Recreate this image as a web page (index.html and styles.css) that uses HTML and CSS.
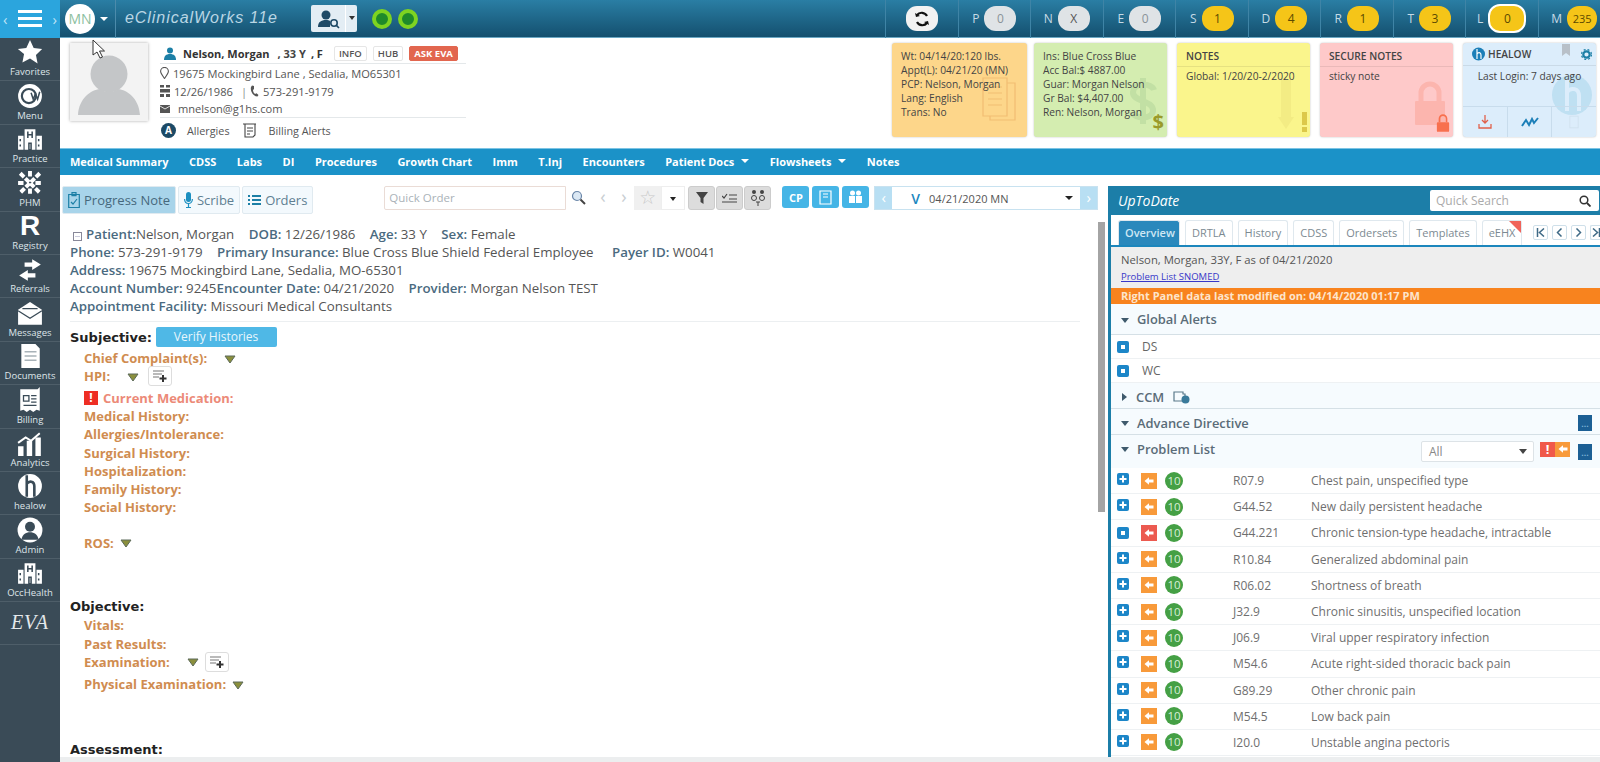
FILE: index.html
```html
<!DOCTYPE html>
<html lang="en">
<head>
    <meta charset="UTF-8">
    <title>eClinicalWorks 11e</title>
    <link rel="stylesheet" href="styles.css">
</head>
<body>
    <svg class="defs" width="0" height="0">
        <symbol id="i-arrow" viewBox="0 0 16 16"><path d="M2 8l6-5v3h6v4H8v3z" fill="#fff"/></symbol>
        <symbol id="i-plus" viewBox="0 0 12 12"><rect width="12" height="12" rx="2" fill="#1c86c8"/><path d="M6 2.5v7M2.5 6h7" stroke="#fff" stroke-width="2"/></symbol>
        <symbol id="i-dot" viewBox="0 0 12 12"><rect width="12" height="12" rx="2" fill="#1c86c8"/><rect x="4" y="4" width="4" height="4" fill="#fff"/></symbol>
        <symbol id="i-hosp" viewBox="0 0 24 24"><path d="M7 3h10v19H7zM1 9h5v13H1zM18 9h5v13h-5z" fill="#fff"/><path d="M10 5v6M14 5v6M10 8h4M11 16h2v6h-2zM3 12v2M3 17v2M20 12v2M20 17v2" stroke="#3a4b57" stroke-width="1.4" fill="none"/></symbol>
        <symbol id="i-tri" viewBox="0 0 12 9"><path d="M1 1h10L6 8z" fill="#8a8f3c" stroke="#5c6a5a"/></symbol>
        <symbol id="i-addnote" viewBox="0 0 16 14"><path d="M1 2h11M1 5h9M1 8h6" stroke="#777" stroke-width="1.2"/><path d="M11 6v7M7.5 9.5h7" stroke="#333" stroke-width="2"/></symbol>
    </svg>

    <!-- Top bar -->
    <header class="topbar">
        <div class="menu-box">
            <span class="chev">&#8249;</span>
            <span class="burger"><i></i><i></i><i></i></span>
            <span class="chev">&#8250;</span>
        </div>
        <div class="avatar">MN</div>
        <span class="caret-white"></span>
        <div class="brand">eClinicalWorks 11e</div>
        <div class="find-btn">
            <svg width="24" height="20" viewBox="0 0 24 20"><circle cx="9" cy="6" r="4.5" fill="#1f4a66"/><path d="M1 18c0-5 3-7 8-7 2 0 3 .4 4 1v6z" fill="#1f4a66"/><circle cx="17" cy="14" r="3.2" fill="none" stroke="#1f4a66" stroke-width="1.6"/><path d="M19.4 16.4l2.6 2.6" stroke="#1f4a66" stroke-width="1.6"/></svg>
            <span class="find-caret"></span>
        </div>
        <div class="lights"><span class="light"></span><span class="light"></span></div>
        <div class="counters">
            <div class="counter">
                <span class="refresh">
                    <svg width="18" height="18" viewBox="0 0 18 18"><path d="M14 6a6 6 0 0 0-10-1M4 12a6 6 0 0 0 10 1" fill="none" stroke="#111" stroke-width="2.2"/><path d="M2 3l1 4 4-1zM16 15l-1-4-4 1z" fill="#111"/></svg>
                </span>
            </div>
            <div class="counter"><b>P</b><span class="pill grey">0</span></div>
            <div class="counter"><b>N</b><span class="pill grey dark">X</span></div>
            <div class="counter"><b>E</b><span class="pill grey">0</span></div>
            <div class="counter"><b>S</b><span class="pill">1</span></div>
            <div class="counter"><b>D</b><span class="pill">4</span></div>
            <div class="counter"><b>R</b><span class="pill">1</span></div>
            <div class="counter"><b>T</b><span class="pill">3</span></div>
            <div class="counter"><b>L</b><span class="pill ring">0</span></div>
            <div class="counter"><b>M</b><span class="pill small">235</span></div>
        </div>
    </header>

    <div class="main">
        <!-- Left Sidebar -->
        <nav class="sidebar">
            <a class="side-item"><svg width="26" height="26" viewBox="0 0 24 24"><path d="M12 1l3.4 7.3 7.8 1-5.7 5.5 1.5 7.9L12 18l-7 3.7 1.5-7.9L.8 9.3l7.8-1z" fill="#fff"/></svg><span>Favorites</span></a>
            <a class="side-item"><svg width="26" height="26" viewBox="0 0 24 24"><circle cx="12" cy="12" r="11" fill="#fff"/><circle cx="11" cy="12" r="6.5" fill="none" stroke="#3a4b57" stroke-width="2"/><path d="M13 9l2 6 2-5 2 5 2-7" fill="none" stroke="#3a4b57" stroke-width="1.4"/></svg><span>Menu</span></a>
            <a class="side-item"><svg width="26" height="26"><use href="#i-hosp"/></svg><span>Practice</span></a>
            <a class="side-item"><svg width="26" height="26" viewBox="0 0 24 24"><path d="M3 3l18 18M21 3L3 21M12 1v6M12 17v6M1 12h6M17 12h6" stroke="#fff" stroke-width="3.6" stroke-dasharray="5 1.6" fill="none"/></svg><span>PHM</span></a>
            <a class="side-item"><strong class="big-r">R</strong><span>Registry</span></a>
            <a class="side-item"><svg width="26" height="24" viewBox="0 0 24 22"><path d="M14 1l8 5-8 5V8H7V4h7zM10 11l-8 5 8 5v-3h7v-4h-7z" fill="#fff"/></svg><span>Referrals</span></a>
            <a class="side-item"><svg width="26" height="24" viewBox="0 0 24 22"><path d="M12 0l11 7v14H1V7z" fill="#fff"/><path d="M1 8l11 7 11-7M5 6h14" stroke="#3a4b57" stroke-width="1.2" fill="none"/></svg><span>Messages</span></a>
            <a class="side-item"><svg width="24" height="26" viewBox="0 0 22 24"><path d="M3 1h13l4 4v18H3z" fill="#fff"/><path d="M6 8h11M6 12h11M6 16h11" stroke="#a8b2b8" stroke-width="1.4"/></svg><span>Documents</span></a>
            <a class="side-item"><svg width="24" height="26" viewBox="0 0 22 24"><path d="M2 2h16l2-2v22l-3-1-3 2-3-2-3 2-3-2-3 1z" fill="#fff"/><path d="M5 8h5v5H5zM12 8h5M12 11h5M12 14h5M5 17h12" stroke="#3a4b57" stroke-width="1.2" fill="none"/></svg><span>Billing</span></a>
            <a class="side-item"><svg width="26" height="24" viewBox="0 0 24 22"><path d="M1 13h5v9H1zM9 8h5v14H9zM17 5h5v17h-5z" fill="#fff"/><path d="M1 10l7-5 5 3 8-7" stroke="#fff" stroke-width="1.8" fill="none"/></svg><span>Analytics</span></a>
            <a class="side-item"><svg width="26" height="26" viewBox="0 0 24 24"><circle cx="12" cy="12" r="11" fill="#fff"/><path d="M9 2v20M9 10c2-3 7-3 7 2v10" stroke="#3a4b57" stroke-width="2.4" fill="none"/></svg><span>healow</span></a>
            <a class="side-item"><svg width="26" height="26" viewBox="0 0 24 24"><circle cx="12" cy="12" r="11.5" fill="#fff"/><circle cx="12" cy="9" r="4.6" fill="#3a4b57"/><path d="M4 21c1-5 4-7 8-7s7 2 8 7" fill="#3a4b57"/></svg><span>Admin</span></a>
            <a class="side-item"><svg width="26" height="26"><use href="#i-hosp"/></svg><span>OccHealth</span></a>
            <a class="side-item eva">EVA</a>
        </nav>

        <div class="content">
            <!-- Patient header -->
            <section class="patient">
                <div class="photo">
                    <svg width="78" height="78" viewBox="0 0 78 78"><circle cx="39" cy="31" r="18.5" fill="#c4c6c8"/><path d="M8 72c1-17 13-25 22-26 5 4 13 4 18 0 9 1 21 9 22 26z" fill="#c4c6c8"/></svg>
                </div>
                <div class="pt-info">
                    <div class="pt-name">
                        <svg width="12" height="13" viewBox="0 0 12 13"><circle cx="6" cy="3.5" r="3" fill="#1c7fa6"/><path d="M0 13c0-4 2-6 6-6s6 2 6 6z" fill="#1c7fa6"/></svg>
                        <strong>Nelson, Morgan</strong><strong class="pt-age">, 33 Y</strong><strong>, F</strong>
                        <span class="tag">INFO</span><span class="tag">HUB</span><span class="tag tag-red">ASK EVA</span>
                    </div>
                    <div class="pt-line">
                        <svg width="9" height="12" viewBox="0 0 9 12"><path d="M4.5 11.5C2 8 .6 6.2.6 4.3a3.9 3.9 0 0 1 7.8 0c0 1.900-1.400 3.700-3.900 7.200z" fill="none" stroke="#555" stroke-width="1.100"/></svg>
                        <span>19675 Mockingbird Lane , Sedalia, MO65301</span>
                    </div>
                    <div class="pt-line">
                        <svg width="10" height="12" viewBox="0 0 10 12"><path d="M0 0h4v2.500H0zM6 0h4v2.500H6zM0 4h10v3.500H0zM0 9h4v3H0zM6 9h4v3H6z" fill="#555"/></svg>
                        <span>12/26/1986</span><span class="bar">|</span>
                        <svg class="phone" width="9" height="12" viewBox="0 0 9 12"><path d="M2 .5l2 .5v3L3 5c0 2 1 3 2 4l1.500-.7L8.500 10l-1 1.500C3 11.500 0 6 1 2z" fill="#555"/></svg>
                        <span>573-291-9179</span>
                    </div>
                    <div class="pt-line pt-email">
                        <svg width="10" height="8" viewBox="0 0 10 8"><path d="M0 0h10v8H0z" fill="#555"/><path d="M0 1l5 3 5-3" stroke="#fff" stroke-width=".8" fill="none"/></svg>
                        <span>mnelson@g1hs.com</span>
                    </div>
                    <div class="pt-alerts">
                        <span class="alert-a">A</span><span class="alert-label">Allergies</span>
                        <svg width="16" height="15" viewBox="0 0 16 15"><path d="M1 1h13M3 1v13h8l2-2V1M5 5h6M5 8h6M5 11h3" stroke="#444" stroke-width="1.100" fill="none"/></svg>
                        <span class="alert-label">Billing Alerts</span>
                    </div>
                </div>
                <div class="cards">
                    <div class="card orange">
                        <svg class="watermark" width="34" height="44" viewBox="0 0 34 44"><path d="M1 1h24v38H1zM8 39v4h25V6h-8M6 10h14M6 16h14M6 22h14M6 28h14" fill="none" stroke="#f2bd72" stroke-width="1.200"/></svg>
                        <div>Wt: 04/14/20:120 lbs.</div>
                        <div>Appt(L): 04/21/20 (MN)</div>
                        <div>PCP: Nelson, Morgan</div>
                        <div>Lang: English</div>
                        <div>Trans: No</div>
                    </div>
                    <div class="card green">
                        <svg class="watermark wm-dollar" width="28" height="48" viewBox="0 0 28 48"><path d="M14 1v46M25 13c-2-7-20-8-21 2-1 10 21 8 20 19-1 9-19 8-21 1" fill="none" stroke="#c2e0a4" stroke-width="6"/></svg>
                        <div>Ins: Blue Cross Blue</div>
                        <div>Acc Bal:$ 4887.00</div>
                        <div>Guar: Morgan Nelson</div>
                        <div>Gr Bal: $4,407.00</div>
                        <div>Ren: Nelson, Morgan</div>
                        <span class="card-mark dollar">$</span>
                    </div>
                    <div class="card yellow">
                        <svg class="watermark wm-arrow" width="16" height="50" viewBox="0 0 16 50"><path d="M3 0h10v38h3l-8 12-8-12h3z" fill="#f3ec84"/></svg>
                        <div class="card-title">NOTES</div>
                        <div>Global: 1/20/20-2/2020</div>
                        <svg class="card-mark" width="5" height="20" viewBox="0 0 5 20"><path d="M0 0h5v13H0zM0 15h5v5H0z" fill="#dcc84a"/></svg>
                    </div>
                    <div class="card pink">
                        <svg class="watermark wm-lock" width="30" height="44" viewBox="0 0 30 44"><path d="M6 20V12a9 9 0 0 1 18 0v8" fill="none" stroke="#fcb5ae" stroke-width="5"/><rect y="20" width="30" height="24" rx="1" fill="#fcb5ae"/></svg>
                        <div class="card-title">SECURE NOTES</div>
                        <div>sticky note</div>
                        <svg class="card-mark" width="14" height="18" viewBox="0 0 16 20"><path d="M4 9V5a4 4 0 0 1 8 0v4" fill="none" stroke="#f8704e" stroke-width="2"/><rect x="1" y="9" width="14" height="11" rx="1" fill="#f8704e"/></svg>
                    </div>
                    <div class="card blue">
                        <svg class="watermark wm-healow" width="40" height="40" viewBox="0 0 40 40"><circle cx="20" cy="20" r="20" fill="#bfe0f2"/><path d="M15 4v32M15 17c4-5 12-4 12 4v15" stroke="#dcedfb" stroke-width="4" fill="none"/></svg>
                        <div class="card-title healow-title">
                            <svg width="13" height="14" viewBox="0 0 13 14"><circle cx="6.500" cy="7" r="6.500" fill="#1c7fb8"/><path d="M5 2v10M5 7c1-2 4-2 4 1v4" stroke="#fff" stroke-width="1.200" fill="none"/></svg>
                            <span>HEALOW</span>
                            <svg class="bookmark" width="8" height="12" viewBox="0 0 8 12"><path d="M0 0h8v12L4 9l-4 3z" fill="#b8c0c8"/></svg>
                            <svg width="11" height="11" viewBox="0 0 11 11"><circle cx="5.500" cy="5.500" r="3.200" fill="none" stroke="#1c7fa6" stroke-width="2.200"/><circle cx="5.500" cy="5.500" r="5" fill="none" stroke="#1c7fa6" stroke-width="1.200" stroke-dasharray="2 2"/></svg>
                        </div>
                        <div class="healow-login">Last Login: 7 days ago</div>
                        <div class="healow-foot">
                            <span><svg width="16" height="16" viewBox="0 0 16 16"><path d="M8 1v8M5 6l3 3 3-3M2 10v4h12v-4" fill="none" stroke="#e0604a" stroke-width="1.300"/></svg></span>
                            <span><svg width="18" height="12" viewBox="0 0 18 12"><path d="M1 10l4-6 3 5 3-6 2 4 4-5" fill="none" stroke="#1c7fb8" stroke-width="2"/></svg></span>
                            <span><svg width="10" height="14" viewBox="0 0 12 16"><rect x="1" y="1" width="10" height="14" fill="none" stroke="#cfe0ee"/></svg></span>
                        </div>
                    </div>
                </div>
            </section>

            <!-- Chart nav -->
            <div class="chart-nav">
                <a>Medical Summary</a>
                <a>CDSS</a>
                <a>Labs</a>
                <a>DI</a>
                <a>Procedures</a>
                <a>Growth Chart</a>
                <a>Imm</a>
                <a>T.Inj</a>
                <a>Encounters</a>
                <a class="has-caret">Patient Docs</a>
                <a class="has-caret">Flowsheets</a>
                <a>Notes</a>
            </div>

            <div class="work">
                <!-- Progress note -->
                <div class="note-pane">
                    <div class="toolbar">
                        <div class="note-tabs">
                            <span class="note-tab active">
                                <svg width="12" height="16" viewBox="0 0 12 16"><path d="M.7 2.500h10.600v13H.7z" fill="none" stroke="#1c7fa6" stroke-width="1.200"/><path d="M4 .7h4v3H4zM3 10l2 2 4-5" fill="none" stroke="#1c7fa6" stroke-width="1.200"/></svg>
                                Progress Note
                            </span>
                            <span class="note-tab">
                                <svg width="9" height="16" viewBox="0 0 9 16"><rect x="2" y="0" width="5" height="10" rx="2.500" fill="#1c8fc0"/><path d="M.6 7c0 6 7.800 6 7.800 0M4.500 12v3M2 15.500h5" fill="none" stroke="#1c8fc0" stroke-width="1.200"/></svg>
                                Scribe
                            </span>
                            <span class="note-tab">
                                <svg width="13" height="10" viewBox="0 0 13 10"><path d="M0 1h2M4 1h9M0 5h2M4 5h9M0 9h2M4 9h9" stroke="#1c7fa6" stroke-width="1.800"/></svg>
                                Orders
                            </span>
                        </div>
                        <div class="quick-order">
                            <span class="quick-input">Quick Order</span>
                            <span class="quick-btn">
                                <svg width="16" height="16" viewBox="0 0 16 16"><circle cx="6" cy="6" r="4.500" fill="#dbe8f4" stroke="#6a86a8" stroke-width="1.200"/><path d="M9.500 9.500l4.500 4.500" stroke="#444" stroke-width="2"/></svg>
                            </span>
                            <span class="quick-arrow">&#8249;</span>
                            <span class="quick-arrow">&#8250;</span>
                            <span class="quick-star">&#9734;</span>
                            <span class="quick-caret"></span>
                        </div>
                        <div class="tool-group">
                            <span class="tool-btn"><svg width="12" height="12" viewBox="0 0 12 12"><path d="M0 0h12L7.500 6v6l-3-2V6z" fill="#444"/></svg></span>
                            <span class="tool-btn"><svg width="16" height="12" viewBox="0 0 16 12"><path d="M0 4l2 2 3-4M7 3h8M7 7h8M0 10h15" fill="none" stroke="#444" stroke-width="1.200"/></svg></span>
                            <span class="tool-btn"><svg width="18" height="18" viewBox="0 0 18 18"><circle cx="5" cy="3" r="2" fill="#444"/><circle cx="13" cy="3" r="2" fill="#444"/><circle cx="5" cy="9" r="2.500" fill="none" stroke="#444"/><circle cx="13" cy="9" r="2.500" fill="none" stroke="#444"/><path d="M7 13h4M9 13v4" stroke="#444"/></svg></span>
                        </div>
                        <div class="blue-group">
                            <span class="blue-btn">CP</span>
                            <span class="blue-btn"><svg width="13" height="15" viewBox="0 0 13 15"><path d="M1 1h11v13H1zM4 4h5M4 7h5" fill="none" stroke="#fff" stroke-width="1.200"/></svg></span>
                            <span class="blue-btn"><svg width="15" height="14" viewBox="0 0 15 14"><circle cx="4.500" cy="3" r="2.500" fill="#fff"/><circle cx="10.500" cy="3" r="2.500" fill="#fff"/><path d="M1 6h6v7H1zM8 6h6v7H8z" fill="#fff"/></svg></span>
                        </div>
                        <div class="visit-select">
                            <span class="visit-nav">&#8249;</span>
                            <span class="visit-v">V</span>
                            <span class="visit-date">04/21/2020 MN</span>
                            <span class="visit-caret"></span>
                            <span class="visit-nav">&#8250;</span>
                        </div>
                    </div>

                    <div class="note-body">
                        <div class="demo">
                            <div><span class="collapse"></span><b>Patient:</b>Nelson, Morgan <b class="gap">DOB:</b> 12/26/1986 <b class="gap">Age:</b> 33 Y <b class="gap">Sex:</b> Female</div>
                            <div><b>Phone:</b> 573-291-9179 <b class="gap">Primary Insurance:</b> Blue Cross Blue Shield Federal Employee <b class="gap-lg">Payer ID:</b> W0041</div>
                            <div><b>Address:</b> 19675 Mockingbird Lane, Sedalia, MO-65301</div>
                            <div><b>Account Number:</b> 9245<b>Encounter Date:</b> 04/21/2020 <b class="gap">Provider:</b> Morgan Nelson TEST</div>
                            <div><b>Appointment Facility:</b> Missouri Medical Consultants</div>
                        </div>

                        <div class="section-head">Subjective: <span class="verify">Verify Histories</span></div>
                        <div class="item">Chief Complaint(s): <svg class="tri tri-wide" width="12" height="9"><use href="#i-tri"/></svg></div>
                        <div class="item">HPI: <svg class="tri tri-wide" width="12" height="9"><use href="#i-tri"/></svg><span class="add-note"><svg width="16" height="14"><use href="#i-addnote"/></svg></span></div>
                        <div class="item item-alert"><span class="bang">!</span>Current Medication:</div>
                        <div class="item">Medical History:</div>
                        <div class="item">Allergies/Intolerance:</div>
                        <div class="item">Surgical History:</div>
                        <div class="item">Hospitalization:</div>
                        <div class="item">Family History:</div>
                        <div class="item">Social History:</div>
                        <div class="item item-ros">ROS: <svg class="tri" width="12" height="9"><use href="#i-tri"/></svg></div>

                        <div class="section-head section-objective">Objective:</div>
                        <div class="item">Vitals:</div>
                        <div class="item">Past Results:</div>
                        <div class="item">Examination: <svg class="tri tri-wide" width="12" height="9"><use href="#i-tri"/></svg><span class="add-note add-note-tight"><svg width="16" height="14"><use href="#i-addnote"/></svg></span></div>
                        <div class="item item-physical">Physical Examination: <svg class="tri" width="12" height="9"><use href="#i-tri"/></svg></div>

                        <div class="section-head section-assessment">Assessment:</div>
                    </div>
                    <span class="note-scroll"></span>
                </div>

                <!-- Right panel -->
                <aside class="right-panel">
                    <div class="rp-head">
                        <span class="rp-title">UpToDate</span>
                        <span class="rp-search">Quick Search
                            <svg width="12" height="12" viewBox="0 0 12 12"><circle cx="5" cy="5" r="3.800" fill="none" stroke="#333" stroke-width="1.500"/><path d="M8 8l3.500 3.500" stroke="#333" stroke-width="1.800"/></svg>
                        </span>
                    </div>
                    <div class="rp-tabs">
                        <span class="rp-tab active">Overview</span>
                        <span class="rp-tab">DRTLA</span>
                        <span class="rp-tab">History</span>
                        <span class="rp-tab">CDSS</span>
                        <span class="rp-tab">Ordersets</span>
                        <span class="rp-tab">Templates</span>
                        <span class="rp-tab rp-flag">eEHX</span>
                        <span class="rp-pager">
                            <i><svg width="9" height="9" viewBox="0 0 9 9"><path d="M1.500 0v9M8 .5L3.500 4.500 8 8.500" fill="none" stroke="#3f6a86" stroke-width="1.500"/></svg></i>
                            <i><svg width="9" height="9" viewBox="0 0 9 9"><path d="M6.500 .5L2.500 4.500l4 4" fill="none" stroke="#3f6a86" stroke-width="1.500"/></svg></i>
                            <i><svg width="9" height="9" viewBox="0 0 9 9"><path d="M2.500 .5l4 4-4 4" fill="none" stroke="#3f6a86" stroke-width="1.500"/></svg></i>
                            <i class="pager-last"><svg width="9" height="9" viewBox="0 0 9 9"><path d="M7.500 0v9M1 .5l4.500 4L1 8.500" fill="none" stroke="#3f6a86" stroke-width="1.500"/></svg></i>
                        </span>
                    </div>
                    <div class="rp-summary">
                        <div>Nelson, Morgan, 33Y, F as of 04/21/2020</div>
                        <a>Problem List SNOMED</a>
                    </div>
                    <div class="rp-modified">Right Panel data last modified on: 04/14/2020 01:17 PM</div>

                    <div class="rp-section"><span class="down"></span>Global Alerts</div>
                    <div class="rp-alert"><svg width="12" height="12"><use href="#i-dot"/></svg><span>DS</span></div>
                    <div class="rp-alert"><svg width="12" height="12"><use href="#i-dot"/></svg><span>WC</span></div>
                    <div class="rp-section rp-short"><span class="right"></span>CCM
                        <svg class="ccm" width="18" height="15" viewBox="0 0 18 15"><path d="M2 3h9v2h2v7H2z" fill="none" stroke="#5a7a8a" stroke-width="1.200"/><circle cx="13.500" cy="10.500" r="4" fill="#3a7a9a"/></svg>
                    </div>
                    <div class="rp-section rp-short"><span class="down"></span>Advance Directive<span class="more">...</span></div>
                    <div class="rp-section rp-problem">
                        <span class="down"></span><span class="rp-problem-name">Problem List</span>
                        <span class="rp-filter">All<span class="filter-caret"></span></span>
                        <span class="flag-pair"><span class="flag-red">!</span><span class="flag-orange"><svg width="12" height="12"><use href="#i-arrow"/></svg></span></span>
                        <span class="more">...</span>
                    </div>

                    <div class="problem"><svg class="pm" width="12" height="12"><use href="#i-plus"/></svg><span class="arrow-box"><svg width="12" height="12"><use href="#i-arrow"/></svg></span><span class="score">10</span><span class="code">R07.9</span><span>Chest pain, unspecified type</span></div>
                    <div class="problem"><svg class="pm" width="12" height="12"><use href="#i-plus"/></svg><span class="arrow-box"><svg width="12" height="12"><use href="#i-arrow"/></svg></span><span class="score">10</span><span class="code">G44.52</span><span>New daily persistent headache</span></div>
                    <div class="problem"><svg class="pm pm-low" width="12" height="12"><use href="#i-dot"/></svg><span class="arrow-box red"><svg width="12" height="12"><use href="#i-arrow"/></svg></span><span class="score">10</span><span class="code">G44.221</span><span>Chronic tension-type headache, intractable</span></div>
                    <div class="problem"><svg class="pm" width="12" height="12"><use href="#i-plus"/></svg><span class="arrow-box"><svg width="12" height="12"><use href="#i-arrow"/></svg></span><span class="score">10</span><span class="code">R10.84</span><span>Generalized abdominal pain</span></div>
                    <div class="problem"><svg class="pm" width="12" height="12"><use href="#i-plus"/></svg><span class="arrow-box"><svg width="12" height="12"><use href="#i-arrow"/></svg></span><span class="score">10</span><span class="code">R06.02</span><span>Shortness of breath</span></div>
                    <div class="problem"><svg class="pm" width="12" height="12"><use href="#i-plus"/></svg><span class="arrow-box"><svg width="12" height="12"><use href="#i-arrow"/></svg></span><span class="score">10</span><span class="code">J32.9</span><span>Chronic sinusitis, unspecified location</span></div>
                    <div class="problem"><svg class="pm" width="12" height="12"><use href="#i-plus"/></svg><span class="arrow-box"><svg width="12" height="12"><use href="#i-arrow"/></svg></span><span class="score">10</span><span class="code">J06.9</span><span>Viral upper respiratory infection</span></div>
                    <div class="problem"><svg class="pm" width="12" height="12"><use href="#i-plus"/></svg><span class="arrow-box"><svg width="12" height="12"><use href="#i-arrow"/></svg></span><span class="score">10</span><span class="code">M54.6</span><span>Acute right-sided thoracic back pain</span></div>
                    <div class="problem"><svg class="pm" width="12" height="12"><use href="#i-plus"/></svg><span class="arrow-box"><svg width="12" height="12"><use href="#i-arrow"/></svg></span><span class="score">10</span><span class="code">G89.29</span><span>Other chronic pain</span></div>
                    <div class="problem"><svg class="pm" width="12" height="12"><use href="#i-plus"/></svg><span class="arrow-box"><svg width="12" height="12"><use href="#i-arrow"/></svg></span><span class="score">10</span><span class="code">M54.5</span><span>Low back pain</span></div>
                    <div class="problem"><svg class="pm" width="12" height="12"><use href="#i-plus"/></svg><span class="arrow-box"><svg width="12" height="12"><use href="#i-arrow"/></svg></span><span class="score">10</span><span class="code">I20.0</span><span>Unstable angina pectoris</span></div>
                </aside>
            </div>
            <div class="bottom-band"></div>
        </div>
    </div>

    <!-- mouse pointer caught in the capture -->
    <svg class="pointer" width="14" height="20" viewBox="0 0 14 20"><path d="M1 1v15l4-3 3 6 2.500-1-3-6h5z" fill="#fff" stroke="#333"/></svg>
</body>
</html>
```

FILE: styles.css
```css
* {
    box-sizing: border-box;
}

html, body {
    height: 100%;
}

body {
    margin: 0;
    font-family: "Open Sans", Arial, sans-serif;
    font-size: 12px;
    color: #444;
    background: #fff;
    overflow: hidden;
    display: flex;
    flex-direction: column;
}

.defs {
    position: absolute;
}

svg {
    flex: none;
}

/* Top bar */
.topbar {
    height: 38px;
    flex: none;
    display: flex;
    align-items: center;
    background: linear-gradient(#2a7ea4, #14506f);
    border-bottom: 1px solid #6aa8c4;
}

.menu-box {
    width: 60px;
    height: 38px;
    background: #2ba5dd;
    display: flex;
    align-items: center;
    justify-content: space-between;
    padding: 0 3px;
    color: #bfe4f6;
    font-size: 15px;
}

.burger {
    display: flex;
    flex-direction: column;
    gap: 4px;
}

.burger i {
    display: block;
    width: 24px;
    height: 3px;
    background: #fff;
}

.avatar {
    width: 30px;
    height: 30px;
    border-radius: 50%;
    margin-left: 5px;
    background: #fff;
    color: #8cc0a0;
    font-size: 14px;
    text-align: center;
    line-height: 30px;
}

.caret-white {
    margin-left: 5px;
    border: 4px solid transparent;
    border-top: 4px solid #fff;
    border-bottom: 0;
}

.brand {
    margin-left: 7px;
    padding-left: 9px;
    height: 38px;
    border-left: 1px solid #4c8bab;
    color: #b9d6e4;
    font: italic 16px/36px "Liberation Sans", Arial, sans-serif;
    letter-spacing: 0.95px;
    width: 196px;
    flex: none;
}

.find-btn {
    width: 46px;
    height: 27px;
    background: #e3edf4;
    border-radius: 2px;
    display: flex;
    align-items: center;
    padding-left: 6px;
}

.find-caret {
    margin-left: 4px;
    width: 12px;
    height: 27px;
    border-left: 1px solid #fff;
    position: relative;
}

.find-caret::after {
    content: "";
    position: absolute;
    left: 3px;
    top: 11px;
    border: 3px solid transparent;
    border-top: 4px solid #333;
}

.lights {
    margin-left: 15px;
    display: flex;
    gap: 6px;
}

.light {
    width: 20px;
    height: 20px;
    border-radius: 50%;
    background: #1f8a2a;
    border: 4px solid #7ed321;
}

.counters {
    margin-left: auto;
    display: flex;
    height: 38px;
    width: 715px;
    flex: none;
}

.counter {
    width: 72.5px;
    flex: none;
    border-left: 1px solid #3f84a6;
    display: flex;
    align-items: center;
    justify-content: center;
    gap: 5px;
    color: #c6dbe6;
}

.counter b {
    font-weight: 400;
    font-size: 12px;
}

.refresh {
    width: 32px;
    height: 25px;
    border-radius: 11px;
    background: #f2f2f2;
    display: flex;
    align-items: center;
    justify-content: center;
}

.pill {
    width: 32px;
    height: 25px;
    border-radius: 12px;
    background: #f5c518;
    color: #5c4a00;
    font-size: 12px;
    text-align: center;
    line-height: 25px;
}

.pill.grey {
    background: #dfe3e6;
    color: #8a9298;
}

.pill.dark {
    color: #555;
}

.pill.ring {
    width: 38px;
    height: 29px;
    line-height: 25px;
    border: 2px solid #fff;
}

.pill.small {
    font-size: 11px;
    width: 30px;
}

/* Layout */
.main {
    flex: 1;
    min-height: 0;
    display: flex;
}

.sidebar {
    width: 60px;
    flex: none;
    background: #3a4b57;
}

.side-item {
    height: 43.4px;
    border-bottom: 1px solid #4e5e69;
    display: flex;
    flex-direction: column;
    align-items: center;
    justify-content: flex-end;
    padding-bottom: 2px;
    color: #dfe5e9;
    font-size: 9.5px;
    line-height: 12px;
}

.side-item svg {
    margin-bottom: 1px;
}

.big-r {
    color: #fff;
    font: 700 28px/28px "Liberation Sans", sans-serif;
}

.eva {
    font: italic 20px/36px "Liberation Serif", serif;
    color: #e4e9ec;
    justify-content: center;
    letter-spacing: 1px;
}

.content {
    flex: 1;
    min-width: 0;
    display: flex;
    flex-direction: column;
}

/* Patient header */
.patient {
    height: 110px;
    flex: none;
    display: flex;
    padding: 5px 4px 0 10px;
}

.photo {
    width: 78px;
    height: 78px;
    background: #f3f3f3;
    box-shadow: 0 0 3px #aaa;
}

.pt-info {
    margin-left: 12px;
    width: 306px;
    color: #555;
    font-size: 11.1px;
}

.pt-name {
    height: 21px;
    display: flex;
    align-items: center;
    gap: 5px;
    padding-left: 4px;
    border-bottom: 1px solid #e4e8ea;
    color: #333;
    font-size: 11px;
}

.pt-name strong {
    font-weight: 700;
    white-space: nowrap;
}

.pt-name .pt-age {
    margin-left: 3px;
    color: #444;
}

.pt-name > svg + strong {
    margin-left: 2px;
}

.tag {
    border: 1px solid #e6e6e6;
    height: 15px;
    line-height: 13px;
    padding: 0 4px;
    font-size: 9.5px;
    font-weight: 600;
    color: #555;
    margin-left: 6px;
    border-radius: 2px;
    white-space: nowrap;
}

.tag + .tag {
    margin-left: 1px;
}

.tag-red {
    background: #e2664f;
    border-color: #e2664f;
    color: #fff;
    font-weight: 700;
}

.pt-line {
    height: 18px;
    display: flex;
    align-items: center;
    gap: 4px;
    white-space: nowrap;
}

.bar {
    color: #888;
    margin-left: 4px;
}

.phone {
    margin-left: -1px;
}

.pt-email {
    gap: 8px;
    border-bottom: 1px solid #e4e8ea;
}

.pt-alerts {
    height: 25px;
    display: flex;
    align-items: center;
    padding-left: 1px;
    gap: 10px;
    font-size: 10.8px;
}

.alert-a {
    width: 15px;
    height: 15px;
    border-radius: 50%;
    background: #1c4a66;
    color: #fff;
    font-size: 10px;
    font-weight: 700;
    text-align: center;
    line-height: 15px;
}

.alert-label {
    margin-right: 2px;
    margin-left: 1px;
    white-space: nowrap;
}

.cards {
    margin-left: auto;
    display: flex;
    gap: 10px;
}

.card {
    position: relative;
    width: 133px;
    height: 94px;
    border-radius: 3px;
    padding: 6px 9px;
    color: #444;
    font-size: 10.2px;
    line-height: 14px;
    white-space: nowrap;
    box-shadow: 0 0 2px #bbb;
    overflow: hidden;
}

/* keep the text above the faded picture in the card */
.card > div {
    position: relative;
}

.orange { background: #fdd68a; width: 135px; }
.green { background: #d4edb0; margin-left: -3px; }
.yellow { background: #faf58c; }
.pink { background: #fec9c9; }
.blue { background: #dcedfb; padding: 0; }

.card-title {
    font-weight: 600;
    margin: 0 -9px 2px;
    padding: 0 9px 3px;
    border-bottom: 1px solid rgba(0, 0, 0, 0.08);
}

.card-mark {
    position: absolute;
    right: 3px;
    bottom: 5px;
}

.dollar {
    color: #9a9a2a;
    font-size: 20px;
    font-weight: 700;
    line-height: 20px;
}

.watermark {
    position: absolute;
    right: 11px;
    bottom: 16px;
}

.wm-dollar {
    right: 10px;
    bottom: 12px;
}

.wm-arrow {
    right: 16px;
    bottom: 8px;
}

.wm-lock {
    right: 8px;
    bottom: 12px;
}

.wm-healow {
    right: 4px;
    bottom: 22px;
}

.healow-title {
    display: flex;
    align-items: center;
    gap: 3px;
    height: 23px;
    margin: 0;
    padding: 0 4px 0 9px;
}

.bookmark {
    margin-left: auto;
    margin-right: 8px;
    margin-top: -8px;
}

.healow-login {
    text-align: center;
    padding-top: 3px;
}

.card > .healow-foot {
    position: absolute;
    left: 0;
    right: 0;
    bottom: 0;
    height: 31px;
    display: flex;
    border-top: 1px solid #c8dcec;
}

.healow-foot span {
    flex: 1;
    display: flex;
    align-items: center;
    justify-content: center;
    border-left: 1px solid #c8dcec;
}

.healow-foot span:first-child {
    border-left: 0;
}

/* Chart nav */
.chart-nav {
    height: 27px;
    flex: none;
    display: flex;
    align-items: center;
    gap: 20.5px;
    padding: 0 0 2px 10px;
    background: #1b92c8;
    border-top: 1px solid #7cc4e4;
    color: #fff;
    font-size: 11px;
    font-weight: 700;
    white-space: nowrap;
}

.has-caret {
    display: flex;
    align-items: center;
    gap: 7px;
}

.has-caret::after {
    content: "";
    border: 4px solid transparent;
    border-top: 4px solid #fff;
    border-bottom: 0;
}

/* Work area */
.work {
    flex: 1;
    min-height: 0;
    display: flex;
    overflow: hidden;
    padding-top: 11px;
}

.note-pane {
    flex: 1;
    min-width: 0;
    position: relative;
}

.toolbar {
    height: 28px;
    display: flex;
    align-items: flex-start;
}

.note-tabs {
    margin-left: 2px;
    display: flex;
    gap: 2px;
}

.note-tab {
    height: 28px;
    padding: 0 5px;
    display: flex;
    align-items: center;
    gap: 4px;
    color: #5f7f92;
    font-size: 13px;
    background: #f3f9fd;
    border: 1px solid #e0eaf0;
    border-radius: 2px;
}

.note-tab.active {
    background: #a8d4ea;
    color: #46687c;
}

.quick-order {
    margin-left: 71px;
    display: flex;
    height: 24px;
    width: 301px;
    flex: none;
}

.quick-input {
    width: 182px;
    border: 1px solid #eadcd6;
    border-radius: 2px 0 0 2px;
    color: #aab2b8;
    font-size: 11.5px;
    line-height: 22px;
    padding-left: 4px;
}

.quick-btn {
    width: 26px;
    display: flex;
    align-items: center;
    justify-content: center;
}

.quick-arrow {
    width: 21px;
    text-align: center;
    color: #c8ced2;
    font-size: 18px;
    line-height: 20px;
}

.quick-star {
    width: 27px;
    background: #f0f0f0;
    color: #c8c8c8;
    text-align: center;
    font: 19px/22px "DejaVu Sans", sans-serif;
}

.quick-caret {
    width: 24px;
    position: relative;
    border: 1px solid #eee;
}

.quick-caret::after {
    content: "";
    position: absolute;
    left: 8px;
    top: 10px;
    border: 3px solid transparent;
    border-top: 4px solid #222;
}

.tool-group {
    margin-left: 3px;
    display: flex;
    gap: 1px;
}

.tool-btn {
    width: 27px;
    height: 24px;
    background: #dcdcdc;
    border: 1px solid #ccc;
    border-radius: 3px;
    display: flex;
    align-items: center;
    justify-content: center;
}

.blue-group {
    margin-left: 11px;
    display: flex;
    gap: 3px;
}

.blue-btn {
    width: 27px;
    height: 22px;
    border-radius: 3px;
    background: #45b5e6;
    color: #fff;
    font-size: 11px;
    font-weight: 700;
    display: flex;
    align-items: center;
    justify-content: center;
}

.visit-select {
    margin-left: 5px;
    width: 224px;
    height: 24px;
    border: 1px solid #c8e2f0;
    display: flex;
    align-items: center;
    flex: none;
}

.visit-nav {
    width: 17px;
    height: 22px;
    background: #b8dff3;
    color: #fff;
    text-align: center;
    font-size: 15px;
    line-height: 20px;
}

.visit-v {
    margin-left: 19px;
    color: #1c86c0;
    font-size: 14px;
    font-weight: 600;
}

.visit-date {
    margin-left: 9px;
    font-size: 11px;
    color: #555;
}

.visit-caret {
    margin-left: auto;
    margin-right: 7px;
    border: 4px solid transparent;
    border-top: 4px solid #222;
    border-bottom: 0;
}

.note-body {
    padding: 10.6px 0 0 10px;
    font-size: 13.3px;
    line-height: 18.2px;
    white-space: nowrap;
}

.demo {
    color: #555;
    width: 1010px;
    height: 97.5px;
    border-bottom: 1px solid #eceff1;
}

.demo b {
    color: #4a6a80;
    font-weight: 600;
}

.gap {
    margin-left: 11px;
}

.gap-lg {
    margin-left: 15px;
}

.collapse {
    display: inline-block;
    width: 9px;
    height: 9px;
    border: 1px solid #889;
    margin: 0 4px 0 3px;
    vertical-align: -2px;
    background: linear-gradient(#ccd, #ccd) center / 5px 1px no-repeat;
}

.section-head {
    margin-top: 5px;
    height: 22px;
    color: #222;
    font: 700 13px/22px "DejaVu Sans", sans-serif;
}

.verify {
    display: inline-block;
    margin-left: -1px;
    width: 121px;
    height: 20px;
    background: #4fb8e6;
    border-radius: 2px;
    color: #e8f6fc;
    font: 400 12px/20px "Open Sans", sans-serif;
    text-align: center;
    vertical-align: 1px;
}

.item {
    margin-left: 14px;
    color: #d08c50;
    font-weight: 700;
    height: 18.2px;
    font-size: 13px;
    display: flex;
    align-items: center;
    gap: 4px;
}

.tri {
    margin-top: 2px;
    margin-left: 2px;
}

.tri-wide {
    margin-left: 13px;
}

.add-note {
    width: 24px;
    height: 20px;
    margin-left: 5px;
    border: 1px solid #ddd;
    border-radius: 3px;
    background: #fff;
    display: flex;
    align-items: center;
    justify-content: center;
}

.add-note-tight {
    margin-left: 2px;
}

.item-alert {
    margin-top: 3.5px;
    color: #ec8a78;
    gap: 5px;
}

.bang {
    width: 14px;
    height: 14px;
    background: #ee2e24;
    color: #fff;
    text-align: center;
    font-size: 12px;
    line-height: 14px;
}

.item-ros {
    margin-top: 17.5px;
}

.section-objective {
    margin-top: 46.5px;
    height: 18px;
    line-height: 18px;
}

.item-physical {
    margin-top: 4px;
}

.section-assessment {
    margin-top: 46px;
}

.note-scroll {
    position: absolute;
    right: 3px;
    top: 36px;
    width: 7px;
    height: 290px;
    background: #a4a4a4;
}

.bottom-band {
    height: 5px;
    flex: none;
    background: #eceeef;
}

/* Right panel */
.right-panel {
    width: 492px;
    flex: none;
    border-left: 3px solid #1c7ea8;
    color: #666;
    font-size: 12px;
    overflow: hidden;
}

.rp-head {
    height: 29px;
    background: #1c7ea8;
    display: flex;
    align-items: center;
    justify-content: space-between;
    padding: 0 1px 0 7px;
}

.rp-title {
    color: #fff;
    font-size: 14px;
    font-style: italic;
}

.rp-search {
    width: 169px;
    height: 21px;
    background: #fff;
    border-radius: 2px;
    color: #aaa;
    font-size: 12px;
    line-height: 20px;
    padding: 0 8px 0 6px;
    display: flex;
    align-items: center;
    justify-content: space-between;
}

.rp-tabs {
    height: 32px;
    display: flex;
    align-items: flex-end;
    padding-left: 7px;
    gap: 5px;
    border-bottom: 2px solid #1c86bc;
}

.rp-tab {
    height: 25px;
    padding: 0 6px;
    border: 1px solid #dfe8ee;
    border-bottom: 0;
    border-radius: 3px 3px 0 0;
    font-size: 11px;
    line-height: 24px;
    color: #7c8a92;
    white-space: nowrap;
}

.rp-tab.active {
    background: #2a88bc;
    color: #cfe7f4;
    width: 62px;
    font-weight: 600;
}

.rp-flag {
    position: relative;
}

.rp-flag::after {
    content: "";
    position: absolute;
    top: 0;
    right: 0;
    border: 6px solid #f0635a;
    border-left-color: transparent;
    border-bottom-color: transparent;
}

.rp-pager {
    margin-left: 6px;
    display: flex;
    gap: 4px;
    align-self: center;
    margin-top: 5px;
}

.rp-pager i {
    width: 15px;
    height: 15px;
    border: 1px solid #cfe0ea;
    border-radius: 2px;
    display: flex;
    align-items: center;
    justify-content: center;
}

.rp-pager .pager-last {
    width: 12px;
    border-right: 0;
}

.rp-summary {
    height: 41px;
    background: #eeeeee;
    padding: 4px 10px 0;
    font-size: 11.3px;
    line-height: 17px;
    color: #555;
}

.rp-summary a {
    display: block;
    color: #3838c8;
    font-size: 9.5px;
    line-height: 17px;
    text-decoration: underline;
}

.rp-modified {
    height: 16px;
    background: #f8831e;
    color: #fde5cc;
    font-size: 11px;
    font-weight: 700;
    line-height: 16px;
    padding-left: 10px;
}

.rp-section {
    height: 31px;
    background: #f6fbfe;
    border-bottom: 1px solid #d5e0e6;
    display: flex;
    align-items: center;
    font-size: 12.9px;
    font-weight: 600;
    color: #5a6c78;
    padding-right: 8px;
}

.rp-short {
    height: 26px;
    padding-top: 2px;
}

.rp-problem {
    height: 33px;
    border-bottom: 0;
}

.rp-problem-name {
    margin-bottom: 6px;
}

.down {
    margin: 2px 8px 0 10px;
    border: 4px solid transparent;
    border-top: 5px solid #3f5a6c;
    border-bottom: 0;
}

.rp-problem .down {
    margin-top: -4px;
}

.right {
    margin: 0 9px 0 11px;
    border: 4px solid transparent;
    border-left: 5px solid #3f5a6c;
    border-right: 0;
}

.ccm {
    margin-left: 8px;
}

.more {
    margin-left: auto;
    width: 14px;
    height: 16px;
    background: #1c5f94;
    color: #8fc0e0;
    text-align: center;
    font-size: 9px;
    line-height: 18px;
}

.rp-problem .more {
    margin-left: 8px;
}

.rp-filter {
    margin-left: auto;
    width: 113px;
    height: 21px;
    background: #fff;
    border: 1px solid #dde3e7;
    border-radius: 2px;
    font-weight: 400;
    font-size: 12px;
    color: #888;
    line-height: 19px;
    padding-left: 7px;
    position: relative;
}

.filter-caret {
    position: absolute;
    right: 6px;
    top: 7px;
    border: 4px solid transparent;
    border-top: 5px solid #444;
    border-bottom: 0;
}

.flag-pair {
    margin-left: 6px;
    display: flex;
    margin-bottom: 5px;
}

.flag-red {
    width: 15px;
    height: 15px;
    background: #f0594a;
    color: #fff;
    text-align: center;
    font-weight: 700;
    line-height: 15px;
}

.flag-orange {
    width: 15px;
    height: 15px;
    background: #f89a3a;
    display: flex;
    align-items: center;
    justify-content: center;
}

.rp-alert {
    height: 24px;
    display: flex;
    align-items: center;
    padding-left: 6px;
    border-bottom: 1px solid #eef1f3;
    font-size: 12px;
    color: #666;
}

.rp-alert span {
    margin-left: 13px;
}

.problem {
    height: 26.2px;
    display: flex;
    align-items: center;
    padding-left: 6px;
    border-bottom: 1px solid #eef1f3;
    color: #6f6f6f;
    font-size: 12px;
    white-space: nowrap;
}

.pm {
    margin-top: -3px;
}

.pm-low {
    margin-top: 1px;
}

.arrow-box {
    width: 16px;
    height: 16px;
    margin-left: 12px;
    background: #f89a3a;
    display: flex;
    align-items: center;
    justify-content: center;
}

.arrow-box.red {
    background: #ec5a50;
}

.score {
    width: 18px;
    height: 18px;
    margin-left: 8px;
    border-radius: 50%;
    background: #45a045;
    color: #d8efd8;
    text-align: center;
    font-size: 11.5px;
    line-height: 18px;
}

.code {
    margin-left: 50px;
    width: 78px;
}

.pointer {
    position: absolute;
    left: 92px;
    top: 39px;
}
```
